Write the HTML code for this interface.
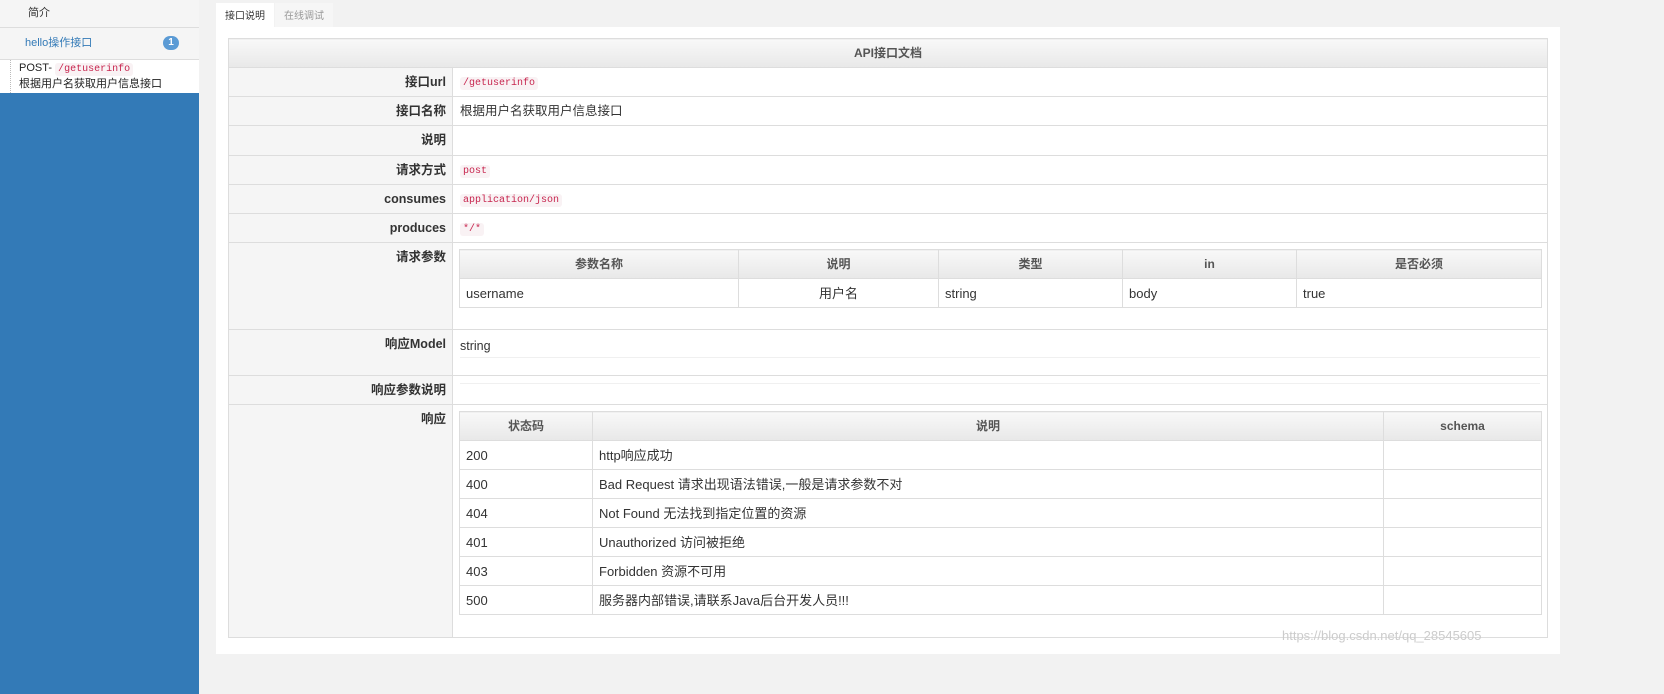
<!DOCTYPE html>
<html><head><meta charset="utf-8"><style>
*{box-sizing:border-box;margin:0;padding:0}
body{width:1664px;height:694px;overflow:hidden;background:#f2f2f2;font-family:"Liberation Sans","Noto Sans CJK SC",sans-serif;font-size:13px;line-height:15px;color:#333;position:relative}
.side{position:absolute;left:0;top:0;width:199px;height:694px;background:#337ab7}
.s1{position:absolute;left:0;top:0;width:199px;height:28px;background:#f5f5f5;border-bottom:1px solid #ddd;font-size:11px;padding:6px 0 0 28px;color:#333}
.s2{position:absolute;left:0;top:28px;width:199px;height:32px;background:#f5f5f5;border-bottom:1px solid #ddd;font-size:11px;padding:8px 0 0 25px;color:#337ab7}
.badge{position:absolute;left:163px;top:8px;width:16px;height:14px;border-radius:8px;background:#5b9bd5;color:#fff;font-size:10px;text-align:center;line-height:14px;font-weight:bold}
.s3{position:absolute;left:0;top:60px;width:199px;height:33px;background:#fff;font-size:11px;padding:1px 0 0 19px;line-height:15px;color:#222}
.s3:before{content:"";position:absolute;left:10px;top:0;height:33px;border-left:1px dotted #bbb}
code{font-family:"Liberation Mono",monospace;color:#c7254e;background:#f9f2f4;font-size:10px;padding:1px 3px;border-radius:3px}
.main{position:absolute;left:216px;top:27px;width:1344px;height:627px;background:#fff}
.tab{position:absolute;top:3px;height:24px;font-size:10px;padding:6px 0 0 9px}
.t1{left:216px;width:58px;background:#fff}
.t2{left:275px;width:58px;background:#f6f6f6;color:#999}
table{border-collapse:collapse;position:absolute;table-layout:fixed}
td,th{border:1px solid #ddd;vertical-align:top;overflow:hidden}
.outer{left:228px;top:38px;width:1320px}
.outer th.h{height:29px;background:linear-gradient(#f8f8f8,#e8e8e8);color:#555;font-size:12px;vertical-align:middle}
.lab{width:224px;background:#f5f5f5;text-align:right;font-weight:bold;padding:7px 6px 0 0;font-size:12.5px;color:#333}
.val{padding:7px 0 0 7px;font-size:12.5px}
.in{position:absolute;left:459px;width:1083px}
.in th{height:29px;background:linear-gradient(#f8f8f8,#e8e8e8);color:#555;font-size:12px;vertical-align:middle}
.in td{height:29px;vertical-align:middle;padding-left:6px}
.wm{position:absolute;left:1282px;top:628px;color:#ccc;font-size:13px}
</style></head><body>
<div class="side"></div>
<div class="s1">简介</div>
<div class="s2">hello操作接口<span class="badge">1</span></div>
<div class="s3">POST- <code>/getuserinfo</code><br>根据用户名获取用户信息接口</div>
<div class="main"></div>
<div class="tab t1">接口说明</div><div class="tab t2">在线调试</div>
<table class="outer">
<colgroup><col style="width:224px"><col></colgroup>
<tr><th class="h" colspan="2">API接口文档</th></tr>
<tr style="height:29px"><td class="lab">接口url</td><td class="val" style="padding-top:6px"><code>/getuserinfo</code></td></tr>
<tr style="height:29px"><td class="lab">接口名称</td><td class="val">根据用户名获取用户信息接口</td></tr>
<tr style="height:30px"><td class="lab">说明</td><td class="val"></td></tr>
<tr style="height:29px"><td class="lab">请求方式</td><td class="val" style="padding-top:6px"><code>post</code></td></tr>
<tr style="height:29px"><td class="lab">consumes</td><td class="val" style="padding-top:6px"><code>application/json</code></td></tr>
<tr style="height:29px"><td class="lab">produces</td><td class="val" style="padding-top:6px"><code>*/*</code></td></tr>
<tr style="height:87px"><td class="lab">请求参数</td><td class="val"></td></tr>
<tr style="height:46px"><td class="lab">响应Model</td><td class="val" style="padding-top:9px">string<div style="border-top:1px solid #f0f0f0;margin-top:3px;width:1080px"></div></td></tr>
<tr style="height:29px"><td class="lab">响应参数说明</td><td class="val" style="padding-top:7px"><div style="border-top:1px solid #f0f0f0;width:1080px"></div></td></tr>
<tr style="height:233px"><td class="lab">响应</td><td class="val"></td></tr>
</table>
<table class="in" style="top:249px">
<colgroup><col style="width:279px"><col style="width:200px"><col style="width:184px"><col style="width:174px"><col></colgroup>
<tr><th>参数名称</th><th>说明</th><th>类型</th><th>in</th><th>是否必须</th></tr>
<tr><td>username</td><td style="text-align:right;padding-right:80px">用户名</td><td>string</td><td>body</td><td>true</td></tr>
</table>
<table class="in" style="top:411px">
<colgroup><col style="width:133px"><col style="width:791px"><col></colgroup>
<tr><th>状态码</th><th>说明</th><th>schema</th></tr>
<tr><td>200</td><td>http响应成功</td><td></td></tr>
<tr><td>400</td><td>Bad Request 请求出现语法错误,一般是请求参数不对</td><td></td></tr>
<tr><td>404</td><td>Not Found 无法找到指定位置的资源</td><td></td></tr>
<tr><td>401</td><td>Unauthorized 访问被拒绝</td><td></td></tr>
<tr><td>403</td><td>Forbidden 资源不可用</td><td></td></tr>
<tr><td>500</td><td>服务器内部错误,请联系Java后台开发人员!!!</td><td></td></tr>
</table>
<div class="wm">https://blog.csdn.net/qq_28545605</div>
</body></html>
